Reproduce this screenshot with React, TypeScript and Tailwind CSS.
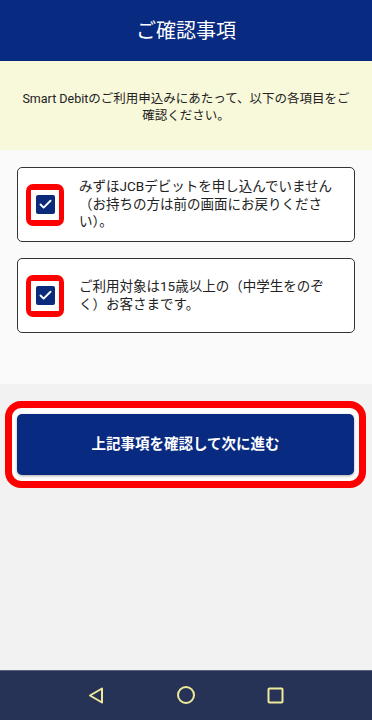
import { Check } from 'lucide-react';

const items = [
  'みずほJCBデビットを申し込んでいません（お持ちの方は前の画面にお戻りください）。',
  'ご利用対象は15歳以上の（中学生をのぞく）お客さまです。',
];

const CheckItem = ({ text }: { text: string }) => (
  <div className="flex h-[75px] items-center rounded-[5px] border border-[#333] bg-white pl-[8px]">
    <div className="flex h-[42px] w-[38px] shrink-0 items-center justify-center rounded-[7px] bg-[#ff0000]">
      <div className="flex h-[30px] w-[28px] items-center justify-center bg-white">
        <span className="flex h-[19px] w-[19px] items-center justify-center rounded-[2px] bg-[#0b2a7c]">
          <Check size={15} strokeWidth={3} className="text-white" />
        </span>
      </div>
    </div>
    <p className="ml-[15px] w-[257px] text-[13.5px] leading-[17.5px] text-[#222]">{text}</p>
  </div>
);

export default function App() {
  return (
    <div
      className="flex h-[720px] w-[372px] flex-col bg-[#f2f2f2]"
      style={{ fontFamily: 'Roboto, "Noto Sans CJK JP", sans-serif' }}
    >
      {/* ヘッダー */}
      <header className="flex h-[61px] shrink-0 items-center justify-center bg-[#082a80]">
        <h1 className="text-[20px] text-white">ご確認事項</h1>
      </header>

      {/* 案内 */}
      <div className="flex h-[89px] shrink-0 items-center justify-center bg-[#f8f8da] px-[18px] pt-[2px]">
        <p className="text-center text-[12.5px] leading-[17px] text-[#222]">
          Smart Debitのご利用申込みにあたって、以下の各項目をご確認ください。
        </p>
      </div>

      {/* チェック項目 */}
      <div className="flex h-[234px] shrink-0 flex-col gap-[16px] bg-[#fafafa] px-[17px] pt-[17px]">
        {items.map((item) => (
          <CheckItem key={item} text={item} />
        ))}
      </div>

      {/* ボタン */}
      <div className="flex-1 pt-[17px] pl-[5px] pr-[6px]">
        <div className="rounded-[16px] border-[7px] border-[#ff0000] bg-white px-[5px] py-[6px]">
          <button className="flex h-[61px] w-full items-center justify-center rounded-[5px] bg-[#082a80] text-[14.5px] font-bold text-white shadow-[0_1px_3px_rgba(0,0,0,0.35)]">
            上記事項を確認して次に進む
          </button>
        </div>
      </div>

      {/* ナビゲーションバー */}
      <nav className="flex h-[50px] shrink-0 items-center border-t border-[#58627c] bg-[#263357]">
        <div className="flex w-full items-center justify-center gap-[72px] pb-[1px]">
          <svg width="17" height="17" viewBox="0 0 17 17" fill="none" stroke="#efe99a" strokeWidth="2" strokeLinejoin="round">
            <path d="M14 1.5 L2 8.5 L14 15.5 Z" />
          </svg>
          <svg width="18" height="18" viewBox="0 0 18 18" fill="none" stroke="#efe99a" strokeWidth="2">
            <circle cx="9" cy="9" r="8" />
          </svg>
          <svg width="17" height="17" viewBox="0 0 17 17" fill="none" stroke="#efe99a" strokeWidth="2">
            <rect x="1.5" y="1.5" width="14" height="14" rx="1" />
          </svg>
        </div>
      </nav>
    </div>
  );
}
